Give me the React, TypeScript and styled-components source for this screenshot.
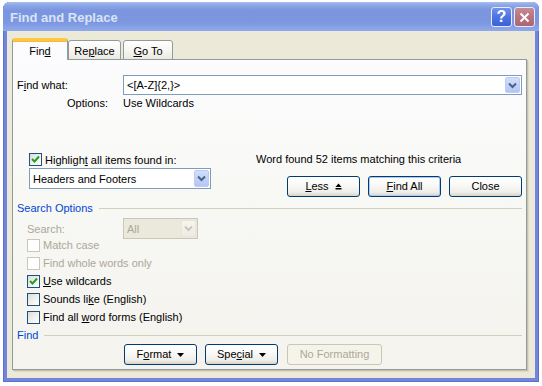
import React from 'react';
import styled, { createGlobalStyle } from 'styled-components';

const Global = createGlobalStyle`
  html, body {
    margin: 0;
    padding: 0;
    background: #fff;
  }
  body {
    font-family: "Liberation Sans", Arial, sans-serif;
    font-size: 11px;
    color: #000;
  }
`;

const Page = styled.div`
  width: 542px;
  height: 386px;
  box-sizing: border-box;
  padding: 2px 3px 4px 3px;
  background: #fff;
`;

const Window = styled.div`
  width: 536px;
  height: 380px;
  display: flex;
  flex-direction: column;
  border-radius: 7px 7px 0 0;
  overflow: hidden;
  background: #7186db;
  box-shadow: inset 1px 0 0 #5d70d0, inset -1px 0 0 #5d70d0, inset 0 -1px 0 #5d70d0;
`;

const TitleBar = styled.div`
  height: 29px;
  flex-shrink: 0;
  display: flex;
  align-items: flex-start;
  padding: 5px 4px 0 7px;
  box-sizing: border-box;
  background: linear-gradient(
    180deg,
    #a9bdf0 0%,
    #8ea7e7 10%,
    #7b96df 28%,
    #7c97e0 70%,
    #88a3e8 90%,
    #90aaea 100%
  );
`;

const Title = styled.div`
  flex: 1;
  font-family: "Liberation Sans", Arial, sans-serif;
  font-weight: bold;
  font-size: 13px;
  line-height: 22px;
  color: #d8e4f8;
`;

const CaptionButton = styled.div<{ $kind: 'help' | 'close' }>`
  width: 21px;
  height: 20px;
  box-sizing: border-box;
  margin-left: 2px;
  border: 1px solid #e6ecfa;
  border-radius: 3px;
  display: flex;
  align-items: center;
  justify-content: center;
  color: #fff;
  font-weight: bold;
  font-size: 16px;
  background: ${(p) =>
    p.$kind === 'help'
      ? 'linear-gradient(180deg, #6f92f0 0%, #4d73e2 50%, #3a62d6 100%)'
      : 'linear-gradient(180deg, #c58b93 0%, #b77480 50%, #ab6673 100%)'};
`;

const Client = styled.div`
  flex: 1;
  margin: 0 4px 4px 4px;
  background: #ece9d8;
  padding: 7px 8px 8px 5px;
  display: flex;
  flex-direction: column;
`;

const Tabs = styled.div`
  height: 22px;
  display: flex;
  align-items: flex-end;
  position: relative;
  z-index: 1;
  margin-bottom: -1px;
`;

const Tab = styled.div<{ $active?: boolean; $w: number; $gap?: number }>`
  width: ${(p) => p.$w}px;
  margin-left: ${(p) => p.$gap ?? 0}px;
  height: ${(p) => (p.$active ? 22 : 20)}px;
  box-sizing: border-box;
  border: 1px solid #919b9c;
  border-bottom: ${(p) => (p.$active ? 'none' : '1px solid #919b9c')};
  border-radius: 3px 3px 0 0;
  background: ${(p) =>
    p.$active ? '#fcfcfe' : 'linear-gradient(180deg, #ffffff 0%, #f5f4ef 60%, #e9e8e1 100%)'};
  display: flex;
  align-items: flex-end;
  justify-content: center;
  line-height: 13px;
  padding-bottom: ${(p) => (p.$active ? 2 : 1)}px;
  border-top: ${(p) => (p.$active ? '3px solid #ffc83c' : '1px solid #919b9c')};
  box-shadow: ${(p) => (p.$active ? 'inset 0 1px 0 #f7b64a' : 'none')};
`;

const Panel = styled.div`
  height: 311px;
  box-sizing: border-box;
  border: 1px solid #919b9c;
  background: linear-gradient(180deg, #fcfcfe 0%, #f8f8f5 40%, #f4f3ee 100%);
  box-shadow: 1px 1px 0 #c5c2b2, 2px 2px 0 #dcd9c8;
  padding: 0 4px;
  display: flex;
  flex-direction: column;
`;

const Row = styled.div<{ $top?: number; $h?: number; $indent?: number }>`
  display: flex;
  align-items: center;
  margin-top: ${(p) => p.$top ?? 0}px;
  height: ${(p) => (p.$h ? `${p.$h}px` : 'auto')};
  padding-left: ${(p) => p.$indent ?? 0}px;
  line-height: 14px;
  flex-shrink: 0;
`;

const Label = styled.span<{ $w?: number; $pad?: number; $disabled?: boolean }>`
  width: ${(p) => (p.$w ? `${p.$w}px` : 'auto')};
  padding-left: ${(p) => p.$pad ?? 0}px;
  box-sizing: border-box;
  flex-shrink: 0;
  color: ${(p) => (p.$disabled ? '#aca899' : '#000')};
  white-space: nowrap;
`;

const Key = styled.u`
  text-decoration: underline;
  text-underline-offset: 1px;
`;

const Combo = styled.div<{ $w: number; $h: number; $disabled?: boolean }>`
  width: ${(p) => p.$w}px;
  height: ${(p) => p.$h}px;
  box-sizing: border-box;
  border: 1px solid ${(p) => (p.$disabled ? '#c9c7ba' : '#7f9db9')};
  background: ${(p) => (p.$disabled ? '#ebe9db' : '#fff')};
  color: ${(p) => (p.$disabled ? '#aca899' : '#000')};
  display: flex;
  align-items: center;
  padding: 1px 1px 1px 3px;
  flex-shrink: 0;
`;

const ComboText = styled.span`
  flex: 1;
  white-space: nowrap;
`;

const DropButton = styled.span<{ $disabled?: boolean }>`
  width: 15px;
  align-self: stretch;
  box-sizing: border-box;
  border: 1px solid ${(p) => (p.$disabled ? '#e8e6dc' : '#bccbf2')};
  border-radius: 2px;
  background: ${(p) =>
    p.$disabled
      ? 'linear-gradient(180deg, #f6f5f0 0%, #ecebe4 100%)'
      : 'linear-gradient(180deg, #d2defb 0%, #c1d2f9 50%, #b3c6f5 100%)'};
  display: flex;
  align-items: center;
  justify-content: center;
`;

const Mid = styled.div`
  display: flex;
  margin-top: 43px;
  flex-shrink: 0;
`;

const MidLeft = styled.div`
  margin-left: 12px;
  width: 182px;
  display: flex;
  flex-direction: column;
  gap: 2px;
`;

const MidRight = styled.div`
  margin-left: auto;
  width: 266px;
  display: flex;
  flex-direction: column;
  line-height: 14px;
`;

const Found = styled.div`
  margin-top: -1px;
  white-space: nowrap;
`;

const ButtonRow = styled.div<{ $top?: number; $left?: number; $justify?: string }>`
  display: flex;
  gap: 8px;
  justify-content: ${(p) => p.$justify ?? 'flex-start'};
  margin-top: ${(p) => p.$top ?? 0}px;
  margin-left: ${(p) => p.$left ?? 0}px;
  flex-shrink: 0;
`;

const Button = styled.div<{ $w: number; $disabled?: boolean; $default?: boolean; $gap?: number }>`
  width: ${(p) => p.$w}px;
  height: 21px;
  margin-left: ${(p) => p.$gap ?? 0}px;
  box-sizing: border-box;
  border: 1px solid ${(p) => (p.$disabled ? '#c9c7ba' : '#003c74')};
  border-radius: 3px;
  background: ${(p) =>
    p.$disabled
      ? '#f5f4ea'
      : 'linear-gradient(180deg, #ffffff 0%, #fbfbf9 35%, #efeee9 80%, #d8d3c8 100%)'};
  box-shadow: ${(p) => (p.$default ? 'inset 0 0 0 1px #b0c8f4' : 'none')};
  color: ${(p) => (p.$disabled ? '#aca899' : '#000')};
  display: flex;
  align-items: center;
  justify-content: center;
  gap: 6px;
  line-height: 13px;
  white-space: nowrap;
`;

const Section = styled.div<{ $top?: number }>`
  display: flex;
  align-items: center;
  gap: 6px;
  margin-top: ${(p) => p.$top ?? 0}px;
  line-height: 14px;
  color: #0046d5;
  flex-shrink: 0;
`;

const Rule = styled.span`
  flex: 1;
  height: 1px;
  background: #d0d0bf;
`;

const CheckRow = styled.div<{ $h?: number; $indent?: number; $top?: number }>`
  display: flex;
  align-items: center;
  gap: 3px;
  height: ${(p) => p.$h ?? 18}px;
  padding-left: ${(p) => p.$indent ?? 10}px;
  margin-top: ${(p) => p.$top ?? 0}px;
  line-height: 14px;
  flex-shrink: 0;
`;

const Box = styled.span<{ $disabled?: boolean }>`
  width: 13px;
  height: 13px;
  box-sizing: border-box;
  flex-shrink: 0;
  border: 1px solid ${(p) => (p.$disabled ? '#cac8bb' : '#1c5180')};
  background: ${(p) =>
    p.$disabled ? '#ffffff' : 'linear-gradient(135deg, #dcdcd7 0%, #f3f3f1 60%, #ffffff 100%)'};
  display: flex;
  align-items: center;
  justify-content: center;
`;

const Chevron = ({ disabled }: { disabled?: boolean }) => (
  <svg width="9" height="7" viewBox="0 0 9 7">
    <path
      d="M1 1.5 L4.5 5 L8 1.5"
      fill="none"
      stroke={disabled ? '#c9c7ba' : '#4d6185'}
      strokeWidth="2"
    />
  </svg>
);

const Tick = () => (
  <svg width="9" height="9" viewBox="0 0 9 9">
    <path d="M1 4 L3.5 6.5 L8 1.5" fill="none" stroke="#21a121" strokeWidth="2" />
  </svg>
);

const DownTri = () => (
  <svg width="7" height="4" viewBox="0 0 7 4">
    <path d="M0 0 H7 L3.5 4 Z" fill="#000" />
  </svg>
);

const UpTri = () => (
  <svg width="7" height="7" viewBox="0 0 7 7">
    <path d="M0.5 4 H6.5 L3.5 0.5 Z" fill="#000" />
    <rect x="0.5" y="5" width="6" height="1.5" fill="#000" />
  </svg>
);

const Check = ({
  checked,
  disabled,
  children,
  indent,
  h,
  top,
}: {
  checked?: boolean;
  disabled?: boolean;
  children: React.ReactNode;
  indent?: number;
  h?: number;
  top?: number;
}) => (
  <CheckRow $indent={indent} $h={h} $top={top}>
    <Box $disabled={disabled}>{checked && <Tick />}</Box>
    <Label $disabled={disabled}>{children}</Label>
  </CheckRow>
);

export default function App() {
  return (
    <Page>
      <Global />
      <Window>
        <TitleBar>
          <Title>Find and Replace</Title>
          <CaptionButton $kind="help">?</CaptionButton>
          <CaptionButton $kind="close">
            <svg width="11" height="11" viewBox="0 0 11 11">
              <path d="M1.5 1.5 L9.5 9.5 M9.5 1.5 L1.5 9.5" stroke="#fff" strokeWidth="2" />
            </svg>
          </CaptionButton>
        </TitleBar>
        <Client>
          <Tabs>
            <Tab $active $w={56}>
              <span>
                Fin<Key>d</Key>
              </span>
            </Tab>
            <Tab $w={53}>
              <span>
                Re<Key>p</Key>lace
              </span>
            </Tab>
            <Tab $w={50} $gap={2}>
              <span>
                <Key>G</Key>o To
              </span>
            </Tab>
          </Tabs>
          <Panel>
            <Row $top={15} $h={20}>
              <Label $w={106}>
                F<Key>i</Key>nd what:
              </Label>
              <Combo $w={399} $h={20}>
                <ComboText>&lt;[A-Z]{'{'}2,{'}'}&gt;</ComboText>
                <DropButton>
                  <Chevron />
                </DropButton>
              </Combo>
            </Row>
            <Row $top={1} $h={14}>
              <Label $w={106} $pad={50}>
                Options:
              </Label>
              <Label>Use Wildcards</Label>
            </Row>

            <Mid>
              <MidLeft>
                <Check checked indent={0} h={13}>
                  Highligh<Key>t</Key> all items found in:
                </Check>
                <Combo $w={182} $h={21}>
                  <ComboText>Headers and Footers</ComboText>
                  <DropButton>
                    <Chevron />
                  </DropButton>
                </Combo>
              </MidLeft>
              <MidRight>
                <Found>Word found 52 items matching this criteria</Found>
                <ButtonRow $top={10} $justify="flex-end">
                  <Button $w={73}>
                    <span>
                      <Key>L</Key>ess
                    </span>
                    <UpTri />
                  </Button>
                  <Button $w={73} $default>
                    <span>
                      <Key>F</Key>ind All
                    </span>
                  </Button>
                  <Button $w={73}>Close</Button>
                </ButtonRow>
              </MidRight>
            </Mid>

            <Section $top={4}>
              <span>Search Options</span>
              <Rule />
            </Section>
            <Row $top={3} $h={21}>
              <Label $w={106} $pad={10} $disabled>
                Search:
              </Label>
              <Combo $w={75} $h={21} $disabled>
                <ComboText>All</ComboText>
                <DropButton $disabled>
                  <Chevron disabled />
                </DropButton>
              </Combo>
            </Row>
            <Check disabled top={-3}>
              Match case
            </Check>
            <Check disabled>Find whole words only</Check>
            <Check checked>
              <Key>U</Key>se wildcards
            </Check>
            <Check>
              Sounds li<Key>k</Key>e (English)
            </Check>
            <Check>
              Find all <Key>w</Key>ord forms (English)
            </Check>

            <Section $top={2}>
              <span>Find</span>
              <Rule />
            </Section>
            <ButtonRow $top={2} $left={107}>
              <Button $w={73}>
                <span>
                  F<Key>o</Key>rmat
                </span>
                <DownTri />
              </Button>
              <Button $w={73}>
                <span>
                  Spe<Key>c</Key>ial
                </span>
                <DownTri />
              </Button>
              <Button $w={95} $disabled $gap={1}>
                No Formatting
              </Button>
            </ButtonRow>
          </Panel>
        </Client>
      </Window>
    </Page>
  );
}
